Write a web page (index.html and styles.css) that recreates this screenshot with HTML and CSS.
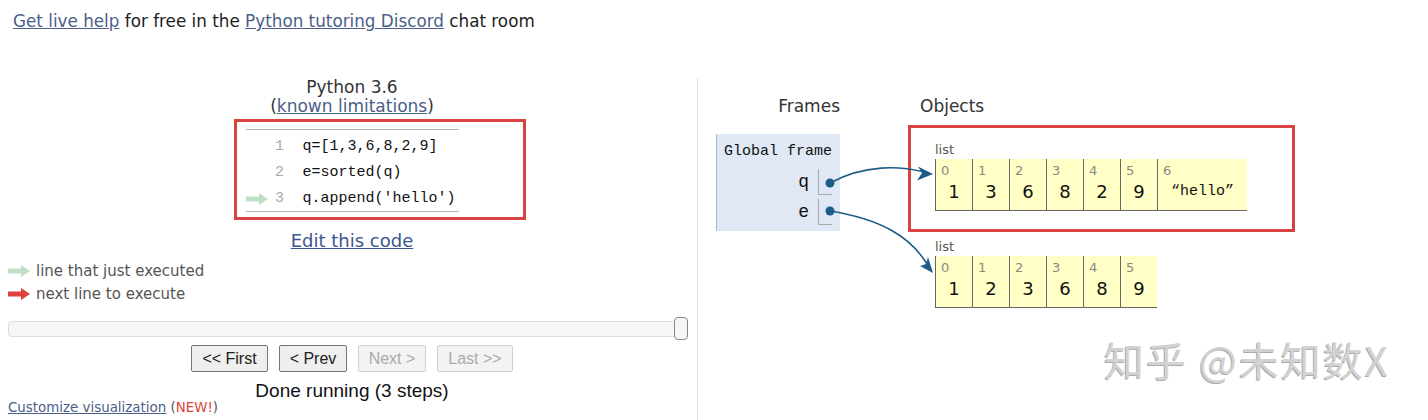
FILE: index.html
```html
<!DOCTYPE html>
<html>
<head>
<meta charset="utf-8">
<link rel="stylesheet" href="styles.css">
</head>
<body>
<div class="page">
  <p class="help"><a href="#">Get live help</a> for free in the <a href="#">Python tutoring Discord</a> chat room</p>
  <div class="main">
    <div class="left">
      <div class="lang">Python 3.6</div>
      <div class="limits">(<a href="#">known limitations</a>)</div>
      <div class="code">
        <div class="code-line"><span class="gut"></span><span class="lineno">1</span><span class="src">q=[1,3,6,8,2,9]</span></div>
        <div class="code-line"><span class="gut"></span><span class="lineno">2</span><span class="src">e=sorted(q)</span></div>
        <div class="code-line"><span class="gut"><svg class="arr" width="22" height="12" viewBox="0 0 22 12"><path d="M0 3.5H13V0L22 6L13 12V8.5H0Z" fill="#bfe0c6"/></svg></span><span class="lineno">3</span><span class="src">q.append('hello')</span></div>
      </div>
      <div class="edit"><a href="#">Edit this code</a></div>
      <div class="legend">
        <div class="legend-row"><svg class="arr" width="22" height="12" viewBox="0 0 22 12"><path d="M0 3.5H13V0L22 6L13 12V8.5H0Z" fill="#bfe0c6"/></svg><span>line that just executed</span></div>
        <div class="legend-row"><svg class="arr" width="22" height="12" viewBox="0 0 22 12"><path d="M0 3.5H13V0L22 6L13 12V8.5H0Z" fill="#e0413d"/></svg><span>next line to execute</span></div>
      </div>
      <div class="slider"><div class="track"></div><div class="handle"></div></div>
      <div class="buttons">
        <button class="btn w-first">&lt;&lt; First</button>
        <button class="btn w-prev">&lt; Prev</button>
        <button class="btn w-next" disabled>Next &gt;</button>
        <button class="btn w-last" disabled>Last &gt;&gt;</button>
      </div>
      <div class="status">Done running (3 steps)</div>
      <div class="customize"><a href="#">Customize visualization</a> (<span class="new">NEW!</span>)</div>
    </div>
    <div class="right">
      <div class="frames-col">
        <div class="col-head frames-head">Frames</div>
        <div class="frame">
          <div class="frame-title">Global frame</div>
          <div class="var-row first"><span class="var-name">q</span><span class="var-val"></span></div>
          <div class="var-row"><span class="var-name">e</span><span class="var-val"></span></div>
        </div>
      </div>
      <div class="objects-col">
        <div class="col-head">Objects</div>
        <div class="heap-obj first">
          <div class="heap-label">list</div>
          <div class="list">
            <div class="cell"><div class="idx">0</div><div class="val">1</div></div>
            <div class="cell"><div class="idx">1</div><div class="val">3</div></div>
            <div class="cell"><div class="idx">2</div><div class="val">6</div></div>
            <div class="cell"><div class="idx">3</div><div class="val">8</div></div>
            <div class="cell"><div class="idx">4</div><div class="val">2</div></div>
            <div class="cell"><div class="idx">5</div><div class="val">9</div></div>
            <div class="cell wide"><div class="idx">6</div><div class="val str">“hello”</div></div>
          </div>
        </div>
        <div class="heap-obj second">
          <div class="heap-label">list</div>
          <div class="list">
            <div class="cell"><div class="idx">0</div><div class="val">1</div></div>
            <div class="cell"><div class="idx">1</div><div class="val">2</div></div>
            <div class="cell"><div class="idx">2</div><div class="val">3</div></div>
            <div class="cell"><div class="idx">3</div><div class="val">6</div></div>
            <div class="cell"><div class="idx">4</div><div class="val">8</div></div>
            <div class="cell"><div class="idx">5</div><div class="val">9</div></div>
          </div>
        </div>
      </div>
    </div>
  </div>
  <svg class="overlay" width="1428" height="420" viewBox="0 0 1428 420">
    <rect x="235.5" y="120.5" width="289" height="98" fill="none" stroke="#d8433f" stroke-width="3"/>
    <rect x="909.5" y="126.5" width="384" height="104" fill="none" stroke="#d8433f" stroke-width="3"/>
    <path d="M830 183 C865 164 900 166 924 172" fill="none" stroke="#1d5c87" stroke-width="1.6"/>
    <path d="M933 174 L918 166.5 L922 173 L917 180.5 Z" fill="#1d5c87"/>
    <path d="M830 211 C880 219 910 236 927 264" fill="none" stroke="#1d5c87" stroke-width="1.6"/>
    <path d="M933 273 L920 266 L926 264 L928 257 Z" fill="#1d5c87"/>
    <circle cx="830" cy="183" r="4.5" fill="#1d5c87"/>
    <circle cx="830" cy="211" r="4.5" fill="#1d5c87"/>
  </svg>
  <div class="watermark">知乎 @未知数X</div>
</div>
</body>
</html>
```
FILE: styles.css
```css
body {
  margin: 0;
  background: #fff;
}
.page {
  position: relative;
  width: 1428px;
  height: 420px;
  overflow: hidden;
  font-family: "DejaVu Sans", sans-serif;
  color: #222;
}
a {
  color: #4b5e8a;
  text-decoration: underline;
}
.help {
  margin: 0;
  height: 78px;
  box-sizing: border-box;
  padding: 11px 0 0 13px;
  font-size: 16.8px;
  line-height: 20px;
}
.main {
  display: flex;
  height: 342px;
}
.left {
  width: 690px;
  padding-left: 7px;
  border-right: 1px solid #ddd;
  display: flex;
  flex-direction: column;
  align-items: center;
}
.lang, .limits {
  font-size: 17px;
  line-height: 19px;
  color: #333;
}
.code {
  margin-top: 13px;
  width: 213px;
  border-top: 1px solid #b5b5b5;
  border-bottom: 1px solid #b5b5b5;
  padding-top: 3px;
}
.code-line {
  display: flex;
  align-items: center;
  height: 26px;
  padding-top: 1px;
  box-sizing: border-box;
  font-family: "Liberation Mono", monospace;
  font-size: 15px;
}
.gut {
  width: 24px;
  display: flex;
  align-items: center;
}
.lineno {
  width: 20px;
  text-align: center;
  color: #aaa;
}
.src {
  padding-left: 13px;
  color: #111;
}
.arr {
  display: block;
}
.edit {
  margin-top: 19px;
  font-size: 18px;
  line-height: 20px;
}
.edit a {
  color: #3d5590;
}
.legend {
  align-self: flex-start;
  margin: 8px 0 0 1px;
}
.legend-row {
  display: flex;
  align-items: center;
  gap: 6px;
  height: 23px;
  font-size: 15px;
  color: #555;
}
.slider {
  position: relative;
  align-self: flex-start;
  margin: 12px 0 0 1px;
  width: 680px;
  height: 23px;
}
.track {
  position: absolute;
  left: 0;
  right: 6px;
  top: 4px;
  height: 14px;
  border: 1px solid #dcdcdc;
  border-radius: 4px;
  background: #f7f7f7;
}
.handle {
  position: absolute;
  right: 0;
  top: 0;
  width: 12px;
  height: 21px;
  border: 1px solid #888;
  border-radius: 4px;
  background: #f6f6f6;
}
.buttons {
  display: flex;
  gap: 11px;
  margin-top: 5px;
}
.btn {
  height: 27px;
  padding: 0;
  font-family: "Liberation Sans", Arial, sans-serif;
  font-size: 16px;
  color: #222;
  background: #efefef;
  border: 1px solid #767676;
  border-radius: 2px;
}
.btn:disabled {
  color: #aaa;
  background: #f3f3f3;
  border-color: #cfcfcf;
}
.w-first { width: 77px; }
.w-prev { width: 68px; }
.w-next { width: 68px; }
.w-last { width: 76px; }
.status {
  margin-top: 10px;
  font-family: "Liberation Sans", Arial, sans-serif;
  font-size: 19px;
  line-height: 18px;
  color: #111;
}
.customize {
  align-self: flex-start;
  margin-left: 1px;
  font-size: 13.4px;
  line-height: 16px;
  color: #555;
}
.new {
  color: #e0413d;
}
.right {
  flex: 1;
  display: flex;
  padding: 18px 0 0 18px;
}
.frames-col {
  width: 124px;
}
.col-head {
  font-size: 17px;
  line-height: 20px;
  color: #333;
}
.frames-head {
  text-align: right;
}
.frame {
  margin-top: 18px;
  height: 97px;
  box-sizing: border-box;
  padding: 8px 8px 7px 7px;
  background: #dfe8f4;
  border-left: 1px solid #a6b7cd;
}
.frame-title {
  font-family: "Liberation Mono", monospace;
  font-size: 15px;
  line-height: 20px;
  white-space: nowrap;
  color: #111;
}
.var-row {
  display: flex;
  justify-content: flex-end;
  height: 26px;
  margin-top: 4px;
}
.var-row.first {
  margin-top: 7px;
}
.var-name {
  font-family: "Liberation Mono", monospace;
  font-size: 18px;
  line-height: 26px;
  padding-right: 9px;
  color: #111;
}
.var-val {
  width: 13px;
  height: 25px;
  border-left: 1px solid #a8a8a8;
  border-bottom: 1px solid #a8a8a8;
}
.objects-col {
  margin-left: 80px;
}
.heap-obj {
  margin-left: 15px;
}
.heap-obj.first {
  margin-top: 26px;
}
.heap-obj.second {
  margin-top: 28px;
}
.heap-label {
  font-size: 13px;
  line-height: 16px;
  color: #555;
}
.list {
  display: flex;
  margin-top: 1px;
}
.cell {
  width: 37px;
  height: 52px;
  box-sizing: border-box;
  padding-top: 5px;
  background: #ffffc6;
  border-left: 1px solid #666;
  border-bottom: 1px solid #666;
}
.cell.wide {
  width: 90px;
}
.idx {
  padding-left: 5px;
  font-size: 13px;
  line-height: 14px;
  color: #888;
}
.val {
  margin-top: 3px;
  text-align: center;
  font-size: 18px;
  line-height: 22px;
  color: #111;
}
.val.str {
  font-family: "Liberation Mono", monospace;
  font-size: 15px;
}
.overlay {
  position: absolute;
  left: 0;
  top: 0;
  pointer-events: none;
}
.watermark {
  position: absolute;
  left: 1104px;
  top: 334px;
  font-family: "Noto Sans CJK SC", sans-serif;
  font-size: 40px;
  line-height: 50px;
  color: #d2d2d2;
  text-shadow: -1px 1px 0 #aaa;
  letter-spacing: 2px;
}
```
